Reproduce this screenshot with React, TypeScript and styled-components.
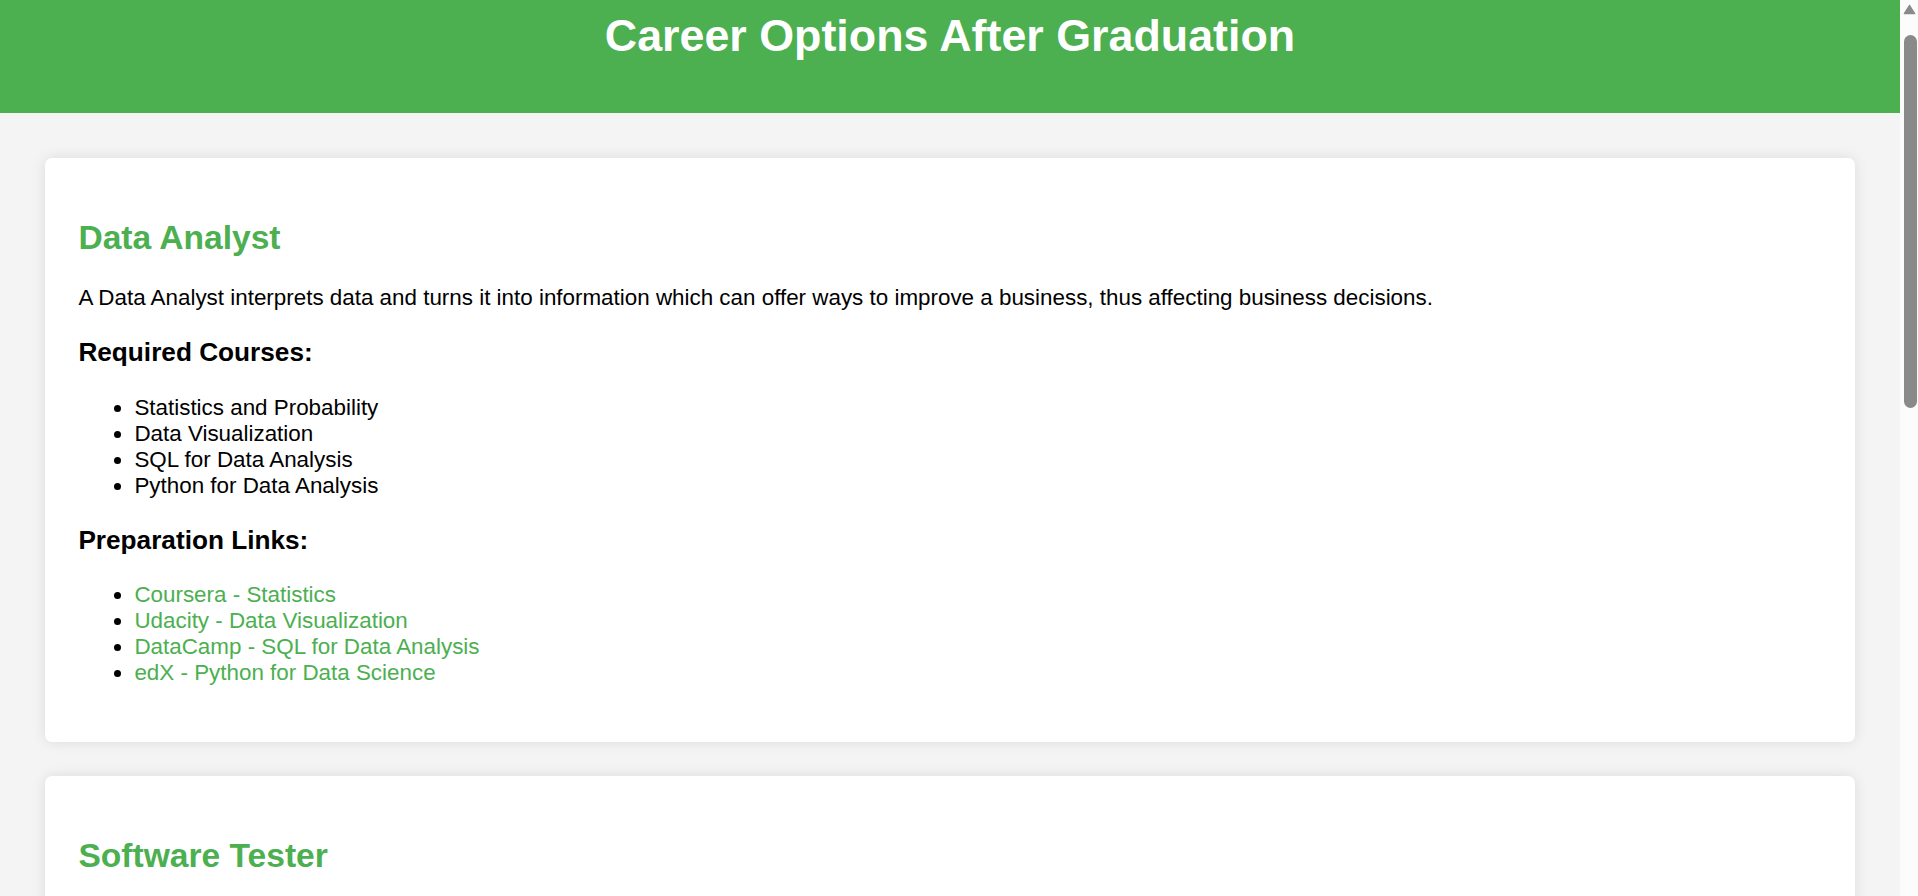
import React from "react";
import styled, { createGlobalStyle } from "styled-components";

const GlobalStyle = createGlobalStyle`
  html, body {
    margin: 0;
    padding: 0;
    overflow: hidden;
  }
  body {
    font-family: "Liberation Sans", Arial, sans-serif;
    background-color: #f4f4f4;
    color: #000;
  }
`;

const Frame = styled.div`
  display: flex;
  height: 100vh;
`;

const Page = styled.div`
  flex: 1;
  min-width: 0;
  overflow: hidden;
`;

// window scrollbar as it appears in the shot
const ScrollRail = styled.aside`
  flex: 0 0 18px;
  display: flex;
  flex-direction: column;
  background-color: #fcfcfc;
`;

const ScrollArrow = styled.svg`
  display: block;
  margin: 4px 0 0 3px;
`;

const ScrollThumb = styled.div`
  width: 13px;
  height: 373px;
  margin: 20px 0 0 4px;
  border-radius: 6.5px;
  background-color: #8a8a8a;
`;

const Header = styled.header`
  box-sizing: border-box;
  height: 113px;
  padding-top: 9.5px;
  background-color: #4caf50;
  color: #ffffff;
  text-align: center;
`;

const PageTitle = styled.h1`
  margin: 0;
  font-size: 44.8px;
  font-weight: 700;
`;

const Main = styled.main`
  display: flex;
  flex-direction: column;
  gap: 33.6px;
  padding: 44.8px;
`;

const Card = styled.section`
  background-color: #ffffff;
  border-radius: 7px;
  padding: 33.6px;
  box-shadow: 0 0 14px rgba(0, 0, 0, 0.1);
`;

const Role = styled.h2`
  margin: 27.9px 0;
  font-size: 33.6px;
  font-weight: 700;
  color: #4caf50;
`;

const Description = styled.p`
  margin: 22.4px 0;
  font-size: 22.4px;
`;

const SubTitle = styled.h3`
  margin: 26.2px 0;
  font-size: 26.2px;
  font-weight: 700;
`;

const List = styled.ul`
  margin: 22.4px 0;
  padding-left: 56px;
  font-size: 22.4px;
`;

const Link = styled.a`
  color: #4caf50;
  text-decoration: none;
`;

type Career = {
  title: string;
  description: string;
  courses: string[];
  links: { label: string; href: string }[];
};

const careers: Career[] = [
  {
    title: "Data Analyst",
    description:
      "A Data Analyst interprets data and turns it into information which can offer ways to improve a business, thus affecting business decisions.",
    courses: [
      "Statistics and Probability",
      "Data Visualization",
      "SQL for Data Analysis",
      "Python for Data Analysis",
    ],
    links: [
      { label: "Coursera - Statistics", href: "#" },
      { label: "Udacity - Data Visualization", href: "#" },
      { label: "DataCamp - SQL for Data Analysis", href: "#" },
      { label: "edX - Python for Data Science", href: "#" },
    ],
  },
  {
    title: "Software Tester",
    description:
      "A Software Tester checks that software works as expected, finds defects before release and helps keep the quality of a product high.",
    courses: [
      "Software Testing Fundamentals",
      "Automation Testing with Selenium",
      "Agile and Scrum",
      "Java for Testers",
    ],
    links: [
      { label: "Udemy - Software Testing", href: "#" },
      { label: "Coursera - Selenium Automation", href: "#" },
      { label: "edX - Agile Development", href: "#" },
      { label: "Guru99 - Java for Testers", href: "#" },
    ],
  },
];

const CareerCard: React.FC<{ career: Career }> = ({ career }) => (
  <Card>
    <Role>{career.title}</Role>
    <Description>{career.description}</Description>
    <SubTitle>Required Courses:</SubTitle>
    <List>
      {career.courses.map((c) => (
        <li key={c}>{c}</li>
      ))}
    </List>
    <SubTitle>Preparation Links:</SubTitle>
    <List>
      {career.links.map((l) => (
        <li key={l.label}>
          <Link href={l.href}>{l.label}</Link>
        </li>
      ))}
    </List>
  </Card>
);

const App: React.FC = () => (
  <>
    <GlobalStyle />
    <Frame>
      <Page>
        <Header>
          <PageTitle>Career Options After Graduation</PageTitle>
        </Header>
        <Main>
          {careers.map((c) => (
            <CareerCard key={c.title} career={c} />
          ))}
        </Main>
      </Page>
      <ScrollRail aria-hidden="true">
        <ScrollArrow width="13" height="11" viewBox="0 0 13 11">
          <path
            d="M1.3 9.6 L6.5 1.2 L11.7 9.6 Z"
            fill="#8a8a8a"
            stroke="#8a8a8a"
            strokeWidth="1.2"
            strokeLinejoin="round"
          />
        </ScrollArrow>
        <ScrollThumb />
      </ScrollRail>
    </Frame>
  </>
);

export default App;
